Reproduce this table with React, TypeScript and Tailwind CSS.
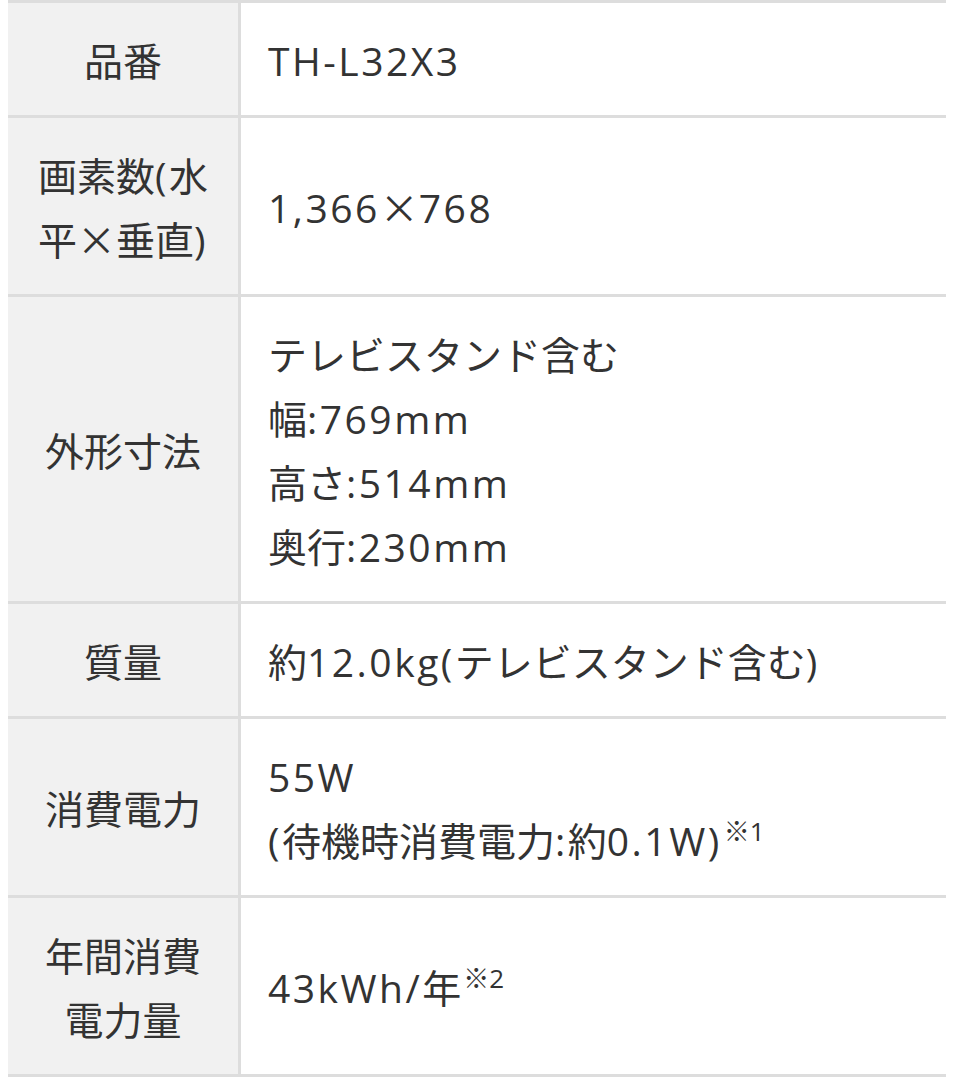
import React from 'react';

type Spec = {
  label: string[];
  value: string[];
  note?: string;
};

const SPECS: Spec[] = [
  { label: ['品番'], value: ['TH-L32X3'] },
  { label: ['画素数(水', '平×垂直)'], value: ['1,366×768'] },
  {
    label: ['外形寸法'],
    value: ['テレビスタンド含む', '幅:769mm', '高さ:514mm', '奥行:230mm'],
  },
  { label: ['質量'], value: ['約12.0kg(テレビスタンド含む)'] },
  { label: ['消費電力'], value: ['55W', '(待機時消費電力:約0.1W)'], note: '1' },
  { label: ['年間消費', '電力量'], value: ['43kWh/年'], note: '2' },
];

// ASCII runs get a wider Latin face, the rest stays in the CJK font
const Mixed: React.FC<{ text: string }> = ({ text }) => (
  <>
    {text.split(/([\x20-\x7e]+)/).map((part, i) =>
      /^[\x20-\x7e]+$/.test(part) ? (
        <span
          key={i}
          className="tracking-[2.5px]"
          style={{ fontFamily: '"Open Sans", "Noto Sans", sans-serif' }}
        >
          {part}
        </span>
      ) : (
        <React.Fragment key={i}>{part}</React.Fragment>
      ),
    )}
  </>
);

const Lines: React.FC<{ lines: string[]; note?: string }> = ({ lines, note }) => (
  <div>
    {lines.map((line, i) => (
      <div key={i} className="h-[64px] whitespace-nowrap">
        <Mixed text={line} />
        {note && i === lines.length - 1 && (
          <span className="relative -top-[15px] ml-[2px] text-[26px] leading-none">
            ※<span style={{ fontFamily: '"Open Sans", sans-serif' }}>{note}</span>
          </span>
        )}
      </div>
    ))}
  </div>
);

const App: React.FC = () => {
  return (
    <div
      className="min-h-[1080px] w-[960px] bg-white text-[#333333]"
      style={{ fontFamily: '"Noto Sans CJK JP", "Noto Sans", sans-serif' }}
    >
      <div className="ml-2 w-[938px] border-t-[3px] border-[#dddddd]">
        {SPECS.map((row, i) => (
          <div key={i} className="flex border-b-[3px] border-[#dddddd]">
            <div className="flex w-[233px] shrink-0 items-center justify-center border-r-[3px] border-[#dddddd] bg-[#f1f1f1] px-3 py-6 text-center text-[39px] leading-[64px]">
              <Lines lines={row.label} />
            </div>
            <div className="flex flex-1 items-center py-6 pl-[27px] pr-6 text-[39px] leading-[64px]">
              <Lines lines={row.value} note={row.note} />
            </div>
          </div>
        ))}
      </div>
    </div>
  );
};

export default App;
